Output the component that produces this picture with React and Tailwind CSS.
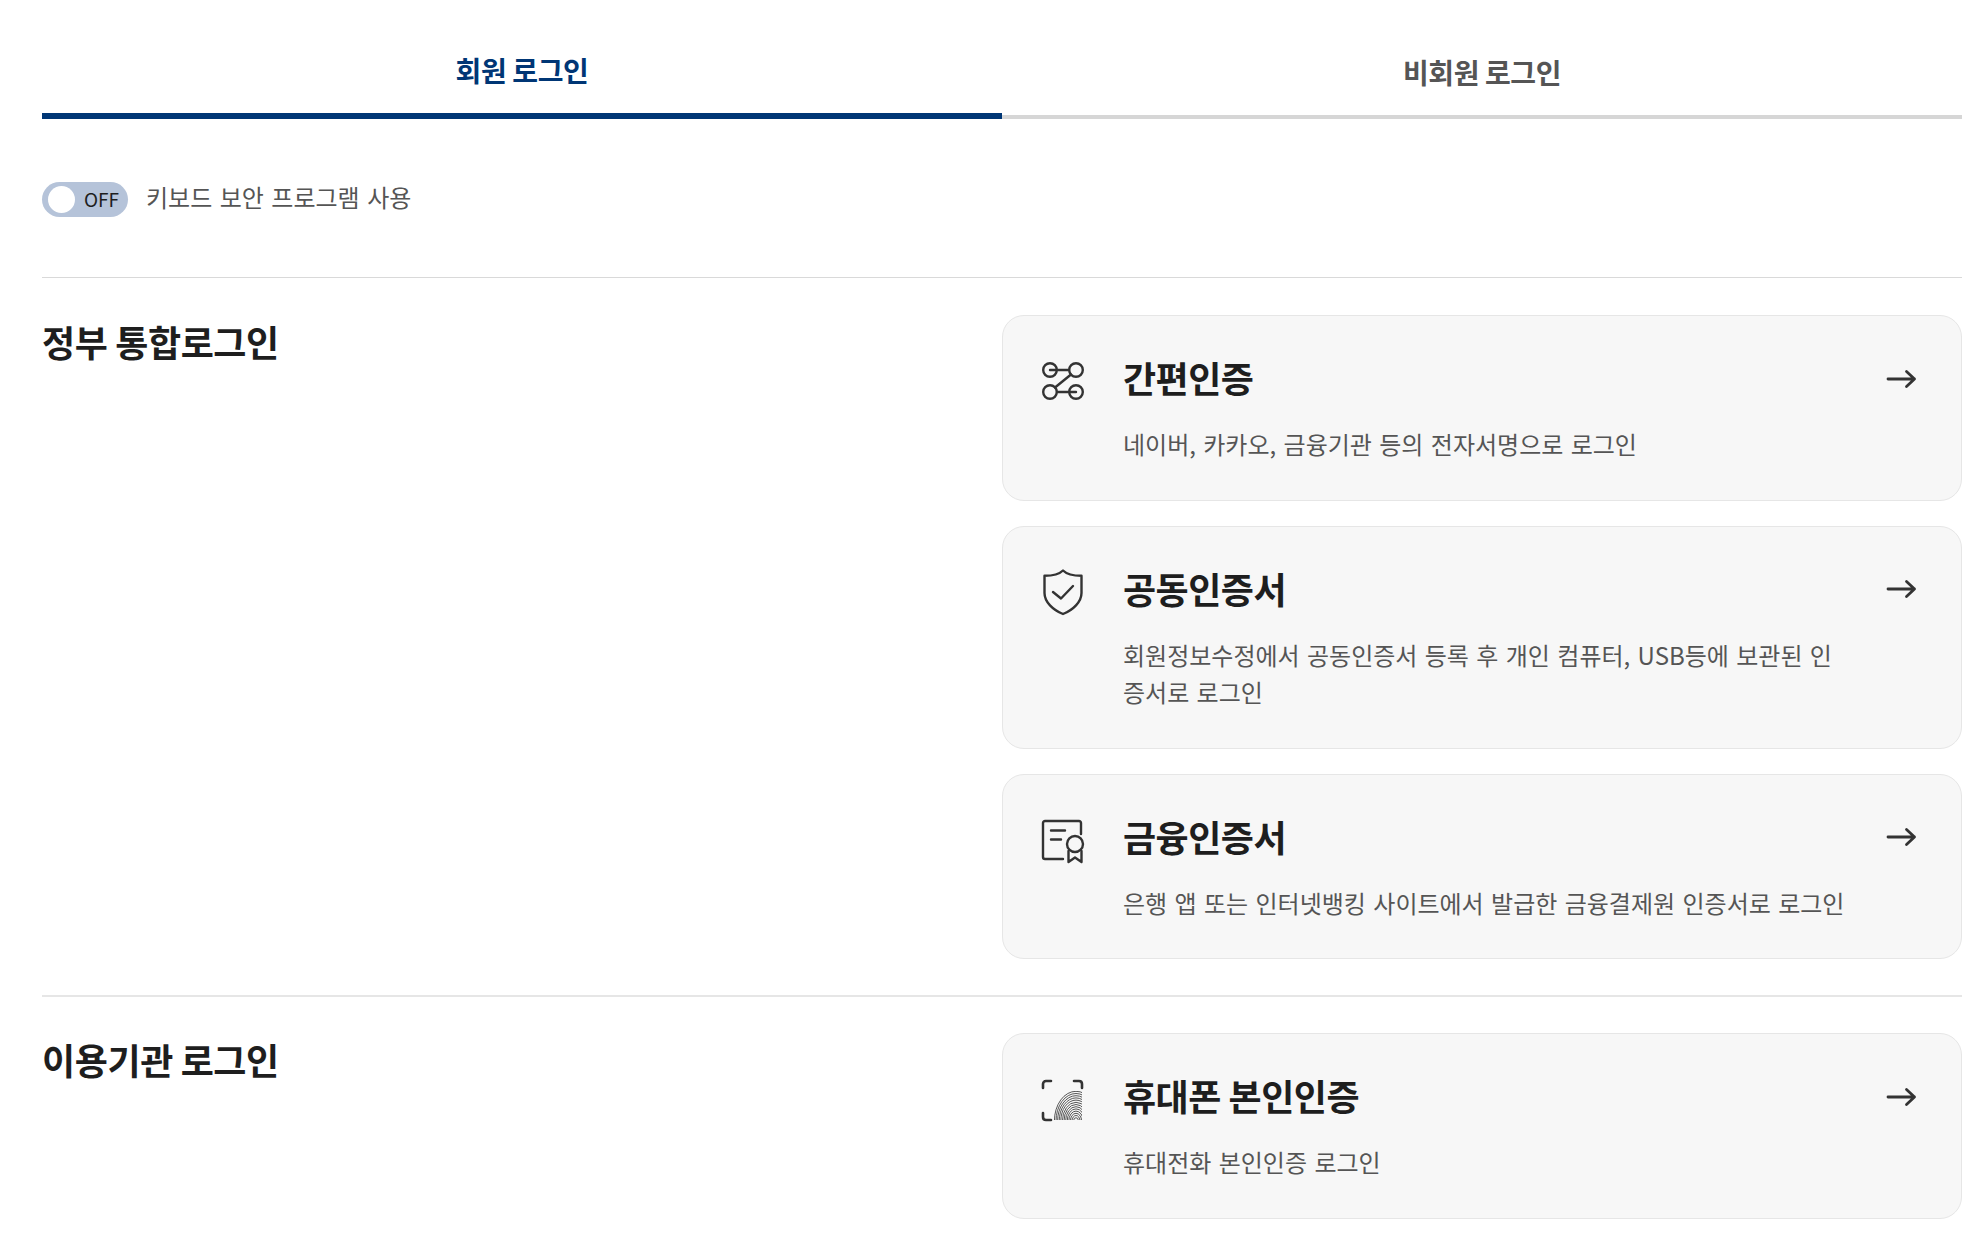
const FONT = "font-['Noto_Sans_CJK_KR','Noto_Sans',sans-serif]";

function IconRoute() {
  return (
    <svg width="48" height="48" viewBox="0 0 48 48" fill="none" stroke="#333" strokeWidth="2.4" strokeLinecap="round">
      <circle cx="11" cy="13" r="6.8" />
      <circle cx="37" cy="13" r="6.8" />
      <circle cx="11" cy="35" r="6.8" />
      <circle cx="37" cy="35" r="6.8" />
      <path d="M11 13H30M18 35H37M16 30.5L32 17.5" />
    </svg>
  );
}

function IconShield() {
  return (
    <svg width="48" height="48" viewBox="0 0 48 48" fill="none" stroke="#333" strokeWidth="2.4" strokeLinecap="round" strokeLinejoin="round">
      <path d="M24 2.5C27.5 6 34 7.8 42.5 7.8V25C42.5 34 34 42 24 46C14 42 5.5 34 5.5 25V7.8C14 7.8 20.5 6 24 2.5Z" />
      <path d="M14 24L22 30.5L34 18" />
    </svg>
  );
}

function IconCert() {
  return (
    <svg width="48" height="48" viewBox="0 0 48 48" fill="none" stroke="#333" strokeWidth="2.4" strokeLinecap="round" strokeLinejoin="round">
      <path d="M42 18V7C42 5.9 41.1 5 40 5H6C4.9 5 4 5.9 4 7V41C4 42.1 4.9 43 6 43H24" />
      <path d="M12 14.5H26M12 23.5H22" />
      <circle cx="36" cy="28" r="8" />
      <path d="M29.5 35V46L36 41.5L42.5 46V35" />
    </svg>
  );
}

function IconFinger() {
  const radii = [3, 5, 7, 9, 11, 13, 15, 17, 19, 21, 23, 25, 27];
  return (
    <svg width="48" height="48" viewBox="0 0 48 48" fill="none">
      <defs>
        <clipPath id="fp">
          <rect x="15" y="16" width="28" height="29" />
        </clipPath>
      </defs>
      <path
        d="M4 13V9C4 7.3 5.3 6 7 6H12M35 6H40C41.7 6 43 7.3 43 9V13M4 38V42C4 43.7 5.3 45 7 45H12"
        stroke="#333"
        strokeWidth="2.6"
        strokeLinecap="round"
      />
      <g clipPath="url(#fp)" stroke="#444" strokeWidth="0.9">
        {radii.map((r) => (
          <ellipse key={r} cx="37" cy="46" rx={r * 0.8} ry={r * 1.1} />
        ))}
      </g>
    </svg>
  );
}

function IconArrow() {
  return (
    <svg width="32" height="32" viewBox="0 0 32 32" fill="none" stroke="#333" strokeWidth="2.8" strokeLinecap="round" strokeLinejoin="round">
      <path d="M3 16H29.5M21.5 8.5L29.5 16L21.5 23.5" />
    </svg>
  );
}

function Card({ icon, title, desc }) {
  return (
    <div className="flex rounded-[22px] border border-[#e6e6e6] bg-[#f7f7f7] pt-[41px] pb-[37px] pl-[36px] pr-[44px]">
      <div className="w-[48px] h-[48px] shrink-0">{icon}</div>
      <div className="ml-[36px] flex-1 min-w-0">
        <div className="flex items-center justify-between h-[48px]">
          <span className="-mt-[8px] text-[36px] font-bold leading-[48px] tracking-[-0.5px] text-[#1e1e1e]">{title}</span>
          <span className="-mt-[5px]"><IconArrow /></span>
        </div>
        <p className="mt-[20px] max-w-[726px] break-all text-[24px] leading-[37.5px] [word-spacing:2px] text-[#555555]">{desc}</p>
      </div>
    </div>
  );
}

export default function App() {
  return (
    <div className={`${FONT} w-[1980px] h-[1235px] overflow-hidden bg-white pl-[42px] pr-[18px]`}>
      <div className="grid grid-cols-2">
        <div className="h-[119px] flex items-center justify-center pt-[27px] border-b-[6px] border-[#003675] text-[28px] font-bold tracking-[-0.4px] text-[#003675]">
          회원 로그인
        </div>
        <div className="h-[119px] flex items-center justify-center pt-[29px] border-b-[4px] border-[#d6d6d6] text-[28px] font-bold tracking-[-0.4px] text-[#555555]">
          비회원 로그인
        </div>
      </div>

      <div className="flex items-center h-[159px] border-b border-[#d9d9d9] pt-[2px]">
        <div className="relative w-[86px] h-[35px] rounded-full bg-[#b5c3d9] flex items-center justify-end pr-[9px]">
          <span className="absolute left-[6px] top-[4px] w-[27px] h-[27px] rounded-full bg-white" />
          <span className="text-[19px] text-[#1e1e1e]">OFF</span>
        </div>
        <span className="ml-[18px] text-[24px] [word-spacing:2.1px] text-[#555555] -mt-[4px]">키보드 보안 프로그램 사용</span>
      </div>

      <div className="grid grid-cols-2 pt-[37px] pb-[36px] border-b-2 border-[#e6e6e6]">
        <h2 className="text-[36px] font-bold leading-[52px] tracking-[-0.4px] text-[#1e1e1e]">정부 통합로그인</h2>
        <div className="flex flex-col gap-[25px]">
          <Card icon={<IconRoute />} title="간편인증" desc="네이버, 카카오, 금융기관 등의 전자서명으로 로그인" />
          <Card icon={<IconShield />} title="공동인증서" desc="회원정보수정에서 공동인증서 등록 후 개인 컴퓨터, USB등에 보관된 인증서로 로그인" />
          <Card icon={<IconCert />} title="금융인증서" desc="은행 앱 또는 인터넷뱅킹 사이트에서 발급한 금융결제원 인증서로 로그인" />
        </div>
      </div>

      <div className="grid grid-cols-2 pt-[36px]">
        <h2 className="text-[36px] font-bold leading-[52px] tracking-[-0.4px] text-[#1e1e1e]">이용기관 로그인</h2>
        <div>
          <Card icon={<IconFinger />} title="휴대폰 본인인증" desc="휴대전화 본인인증 로그인" />
        </div>
      </div>
    </div>
  );
}
